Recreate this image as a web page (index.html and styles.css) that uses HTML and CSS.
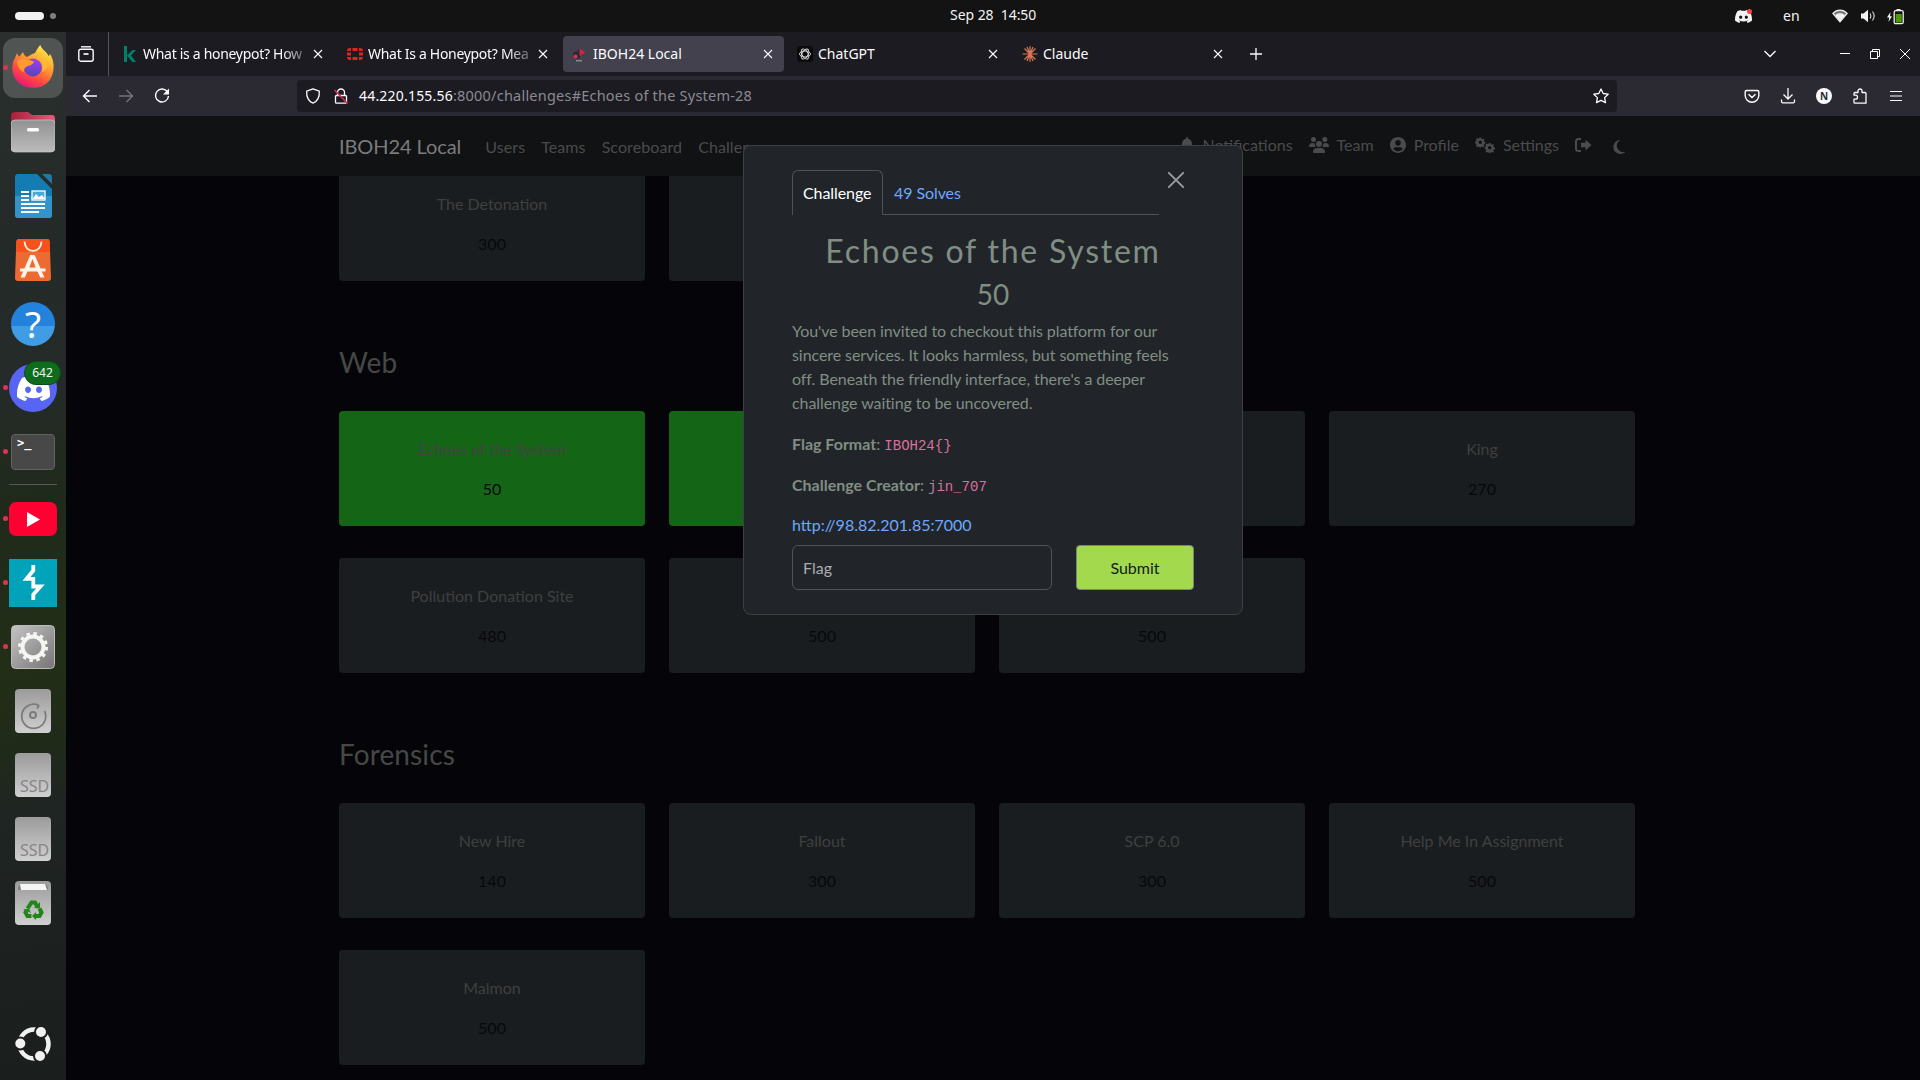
FILE: index.html
```html
<!DOCTYPE html>
<html lang="en">
<head>
<meta charset="utf-8">
<title>IBOH24 Local</title>
<link rel="stylesheet" href="styles.css">
</head>
<body>
<svg width="0" height="0" class="defs">
  <defs>
    <symbol id="x" viewBox="0 0 10 10"><path d="M1 1l8 8M9 1l-8 8" fill="none" stroke="currentColor" stroke-width="1.1"/></symbol>
    <symbol id="discord" viewBox="0 0 24 24"><path fill="currentColor" d="M20.317 4.3698a19.7913 19.7913 0 00-4.8851-1.5152.0741.0741 0 00-.0785.0371c-.211.3753-.4447.8648-.6083 1.2495-1.8447-.2762-3.68-.2762-5.4868 0-.1636-.3933-.4058-.8742-.6177-1.2495a.077.077 0 00-.0785-.037 19.7363 19.7363 0 00-4.8852 1.515.0699.0699 0 00-.0321.0277C.5334 9.0458-.319 13.5799.0992 18.0578a.0824.0824 0 00.0312.0561c2.0528 1.5076 4.0413 2.4228 5.9929 3.0294a.0777.0777 0 00.0842-.0276c.4616-.6304.8731-1.2952 1.226-1.9942a.076.076 0 00-.0416-.1057c-.6528-.2476-1.2743-.5495-1.8722-.8923a.077.077 0 01-.0076-.1277c.1258-.0943.2517-.1923.3718-.2914a.0743.0743 0 01.0776-.0105c3.9278 1.7933 8.18 1.7933 12.0614 0a.0739.0739 0 01.0785.0095c.1202.099.246.1981.3728.2924a.077.077 0 01-.0066.1276 12.2986 12.2986 0 01-1.873.8914.0766.0766 0 00-.0407.1067c.3604.698.7719 1.3628 1.225 1.9932a.076.076 0 00.0842.0286c1.961-.6067 3.9495-1.5219 6.0023-3.0294a.077.077 0 00.0313-.0552c.5004-5.177-.8382-9.6739-3.5485-13.6604a.061.061 0 00-.0312-.0286zM8.02 15.3312c-1.1825 0-2.1569-1.0857-2.1569-2.419 0-1.3332.9555-2.4189 2.157-2.4189 1.2108 0 2.1757 1.0952 2.1568 2.419 0 1.3332-.9555 2.4189-2.1569 2.4189zm7.9748 0c-1.1825 0-2.1569-1.0857-2.1569-2.419 0-1.3332.9554-2.4189 2.1569-2.4189 1.2108 0 2.1757 1.0952 2.1568 2.419 0 1.3332-.946 2.4189-2.1568 2.4189Z"/></symbol>
    <symbol id="gear" viewBox="0 0 20 20"><path fill="currentColor" fill-rule="evenodd" d="M8.4 1h3.2l.5 2.5 1.9.8 2.1-1.4 2.2 2.2-1.4 2.1.8 1.9 2.3.5v3.2l-2.5.5-.8 1.9 1.4 2.1-2.2 2.2-2.1-1.4-1.9.8-.5 2.1H8.4l-.5-2.3-1.9-.8-2.1 1.4-2.2-2.2 1.4-2.1-.8-1.9L0 11.600V8.400l2.300-.5.8-1.900L1.700 3.900l2.200-2.200L6 3.100l1.900-.8zM10 6.700a3.300 3.300 0 100 6.600 3.300 3.300 0 000-6.600z"/></symbol>
    <linearGradient id="gSilver" x1="0" y1="0" x2="0" y2="1"><stop offset="0" stop-color="#9b9b9b"/><stop offset="1" stop-color="#d0d0d0"/></linearGradient>
    <linearGradient id="gGrey" x1="0" y1="0" x2="1" y2="1"><stop offset="0" stop-color="#c4c4c4"/><stop offset="1" stop-color="#757575"/></linearGradient>
    <linearGradient id="gFolder" x1="0" y1="0" x2="0" y2="1"><stop offset="0" stop-color="#919191"/><stop offset="1" stop-color="#bcbcbc"/></linearGradient>
    <linearGradient id="gRed" x1="0" y1="0" x2="1" y2="0"><stop offset="0" stop-color="#a8203c"/><stop offset="1" stop-color="#e85a78"/></linearGradient>
    <linearGradient id="gFire" x1=".8" y1="0" x2=".25" y2="1"><stop offset="0" stop-color="#fff14f"/><stop offset=".38" stop-color="#ffa42e"/><stop offset=".68" stop-color="#ff4f3f"/><stop offset="1" stop-color="#e80f7c"/></linearGradient>
    <linearGradient id="gOrb" x1=".6" y1="0" x2=".4" y2="1"><stop offset="0" stop-color="#a13df2"/><stop offset="1" stop-color="#5246b8"/></linearGradient>
  </defs>
</svg>

<header class="topbar">
  <div class="workspaces"><i class="pill"></i><i class="dot"></i></div>
  <div class="clock">Sep 28&nbsp; 14:50</div>
  <div class="status">
    <span class="tray"><svg width="17" height="17"><use href="#discord"/></svg><i class="alert"></i></span>
    <span class="lang">en</span>
    <svg class="wifi" width="16" height="14" viewBox="0 0 16 14"><path d="M.7 4.300C5-.2 11-.2 15.300 4.300L8 13z" fill="#777"/><path d="M3 6.200c3-2.600 7-2.600 10 0L8 12.500z" fill="#f2f2f2"/><path d="M.9 4.400C5 0 11 0 15.100 4.400L8 12.800z" fill="none" stroke="#f2f2f2" stroke-width="1.200"/></svg>
    <svg class="vol" width="16" height="14" viewBox="0 0 16 14"><path d="M1 4.500h2.500L8 .8v12.400L3.500 9.500H1z" fill="#f2f2f2"/><path d="M10 4.500q1.600 2.500 0 5M12.500 2.500q3.300 4.500 0 9" fill="none" stroke="#ccc" stroke-width="1.200"/></svg>
    <svg class="bat" width="17" height="17" viewBox="0 0 17 17"><path d="M3.500 4L0 9.500h2.200L1.500 14 5 8.300H3z" fill="#f2f2f2"/><rect x="9.500" y="1" width="4" height="2" fill="#f2f2f2"/><rect x="7.200" y="2.700" width="9" height="13" rx="1.500" fill="none" stroke="#f2f2f2" stroke-width="1.300"/><rect x="8.700" y="6" width="6" height="8.500" fill="#4e9a06"/></svg>
  </div>
</header>

<div class="desktop">
  <nav class="dock">
    <div class="slot running focused"><svg width="44" height="46" viewBox="0 0 44 46">
      <path d="M24 9C26 5 28 2 29.500 1c1 4 5 6 7 9 .5 1 1 2 1.500 2l1-2c5 7 5 20-1 27-8 9-23 9-31 1C0 31 0 20 4 14l2-5 2 4 4-5c1 3 2 4 4 5 3-2 5-3 8-4z" fill="url(#gFire)"/>
      <circle cx="22" cy="23.500" r="9" fill="url(#gOrb)"/>
      <path d="M6 18c2-4 6-4 9-2 3 0 6 0 8 2-2 4-6 3-9 6-2 2-1 4-1 4-4-1-6-5-7-10z" fill="#ff9a2c"/>
      <path d="M25 13c6 3 8 8 6 15 3-1 6-5 6-9-2-5-6-7-12-6z" fill="#ffbd35" opacity=".8"/></svg></div>
    <div class="slot"><svg width="44" height="42" viewBox="0 0 44 42"><path d="M0 5q0-4 4-4h13l4 3h20q3 0 3 4v15H0z" fill="url(#gRed)"/><rect x="0" y="9" width="44" height="32" rx="4" fill="url(#gFolder)" stroke="#cacaca" stroke-width=".7"/><rect x="16" y="17" width="12" height="3.500" rx="1.500" fill="#fff"/></svg></div>
    <div class="slot"><svg width="37" height="44" viewBox="0 0 37 44"><path d="M3 0h19l15 15v26q0 3-3 3H3q-3 0-3-3V3q0-3 3-3z" fill="#137db3"/><path d="M0 22h37v19q0 3-3 3H3q-3 0-3-3z" fill="#3294c8"/><path d="M27 0h7q3 0 3 3v7z" fill="#2378a6"/><path d="M6 18h8M6 22h8M6 26h8M6 30h24M6 34h24M6 38h18" stroke="#fff" stroke-width="2"/><rect x="17" y="17" width="13" height="9" fill="#4ba9da" stroke="#fff" stroke-width="1.300"/><path d="M17.500 25l3.500-5 3 3 3-2 3 4z" fill="#fff"/></svg></div>
    <div class="slot"><svg width="36" height="42" viewBox="0 0 36 42"><path d="M4 0h28q2.500 0 2.700 3L36 39q0 3-3 3H3q-3 0-3-3L1.300 3Q1.500 0 4 0z" fill="#ee6a33"/><path d="M4 0h28q2.500 0 2.700 3l.4 10H.9l.4-10Q1.500 0 4 0z" fill="#f4511c"/><path d="M9.500 2.500c.5 12.500 16.500 12.500 17 0" fill="none" stroke="#fff0e4" stroke-width="1.800"/><path d="M15.300 16h4.400L29.500 38.500h-4.300l-3.300-7.500h-8.800l-3.300 7.500H5.500zM17.500 20l-3.200 8.500h6.400z" fill="#fff4ea"/><path d="M5 31h25.500" stroke="#fff4ea" stroke-width="3"/></svg></div>
    <div class="slot"><div class="help">?</div></div>
    <div class="slot running"><div class="discord"><svg width="33" height="33"><use href="#discord"/></svg></div><span class="badge">642</span></div>
    <div class="slot running"><div class="term">&gt;_</div></div>
    <div class="rule"></div>
    <div class="slot running"><div class="yt"><svg width="13" height="15" viewBox="0 0 13 15"><path d="M0 0l13 7.500L0 15z" fill="#fff"/></svg></div></div>
    <div class="slot running"><svg width="48" height="48" viewBox="0 0 48 48"><path d="M0 0h48v48H0z" fill="#00a3ba"/><path d="M24.300 6v5.500L17.500 19.800h6.800v7.700H31.500L24.300 35.500V41" fill="none" stroke="#fff" stroke-width="3.800"/></svg></div>
    <div class="slot running"><svg width="44" height="44" viewBox="0 0 44 44"><rect x=".5" y=".5" width="43" height="43" rx="4" fill="url(#gGrey)" stroke="#bbb"/><circle cx="22" cy="22" r="10.500" fill="none" stroke="#f5f5f2" stroke-width="4"/><circle cx="22" cy="22" r="13.500" fill="none" stroke="#f5f5f2" stroke-width="3" stroke-dasharray="3.500 3.568"/></svg></div>
    <div class="slot"><svg width="36" height="44" viewBox="0 0 36 44"><rect width="36" height="44" rx="4" fill="url(#gSilver)"/><path d="M24 16.500A12 12 0 1029.500 22" fill="none" stroke="#7c7c7c" stroke-width="1.800"/><path d="M24 16.500l-2 3" stroke="#7c7c7c" stroke-width="1.800"/><circle cx="18" cy="26" r="3" fill="none" stroke="#7c7c7c" stroke-width="2"/></svg></div>
    <div class="slot"><div class="ssd">SSD</div></div>
    <div class="slot"><div class="ssd">SSD</div></div>
    <div class="slot"><svg width="36" height="44" viewBox="0 0 36 44"><rect width="36" height="44" rx="4" fill="url(#gSilver)"/><path d="M3 9q0-6 4-6h22q4 0 4 6z" fill="#808080"/><path d="M5 3h25l2 6H6z" fill="#f5f5f5"/><g fill="none" stroke="#238517" stroke-width="4"><path d="M12.500 27.500l4-6h3.500l2 3.500"/><path d="M24.500 27.500l2 4-2 3.500H20"/><path d="M16.500 35h-4l-2-3.500 1-2"/></g><path d="M19 27l6 .5V21zM21 31v8l-4-4zM8 28h6l2 4z" fill="#238517"/></svg></div>
    <div class="spacer"></div>
    <div class="slot apps"><svg width="36" height="36" viewBox="0 0 36 36"><circle cx="19" cy="18" r="14.500" fill="none" stroke="#f1f1f1" stroke-width="4.500"/><g fill="#f1f1f1" stroke="#1c201f" stroke-width="2"><circle cx="5.300" cy="17.500" r="6"/><circle cx="26" cy="6" r="6"/><circle cx="25" cy="30" r="6"/></g></svg></div>
  </nav>

  <div class="browser">
    <div class="tabs">
      <div class="fxview"><svg width="16" height="16" viewBox="0 0 16 16" fill="none" stroke="#fbfbfe" stroke-width="1.400"><path d="M3 .8h10"/><rect x=".8" y="3.200" width="14.400" height="12" rx="2"/><path d="M5.500 8h5" stroke-width="1.700"/></svg></div>
      <div class="tab"><svg class="fav" width="16" height="16" viewBox="0 0 16 16"><path d="M2 0h3v16H2zM14 4L9 9.500l5 6.500h-3.500L5 9.500 10.500 4z" fill="#00816a"/></svg><span class="label fade">What is a honeypot? How</span><svg class="close"><use href="#x"/></svg></div>
      <div class="tab"><svg class="fav" width="16" height="12" viewBox="0 0 16 12" fill="#e2231a"><path d="M0 3q0-3 3-3h1v3zM5.500 0h5v3h-5zM12 0h1q3 0 3 3h-4zM0 4.500h4v3H0zM12 4.500h4v3h-4zM0 9h4v3H3Q0 12 0 9zM5.500 9h5v3h-5zM12 9h4q0 3-3 3h-1z"/></svg><span class="label fade">What Is a Honeypot? Mea</span><svg class="close"><use href="#x"/></svg></div>
      <div class="tab active"><svg class="fav" width="16" height="16" viewBox="0 0 16 16"><path d="M7 3v9" stroke="#2a2835" stroke-width="2"/><circle cx="4.500" cy="9" r="3.500" fill="#2b2936"/><circle cx="3.500" cy="10.500" r="2" fill="#e0304f"/><path d="M7.500 2.500l6 4-6 3.500z" fill="#d02545"/><path d="M4 14.800h6" stroke="#aaa"/></svg><span class="label">IBOH24 Local</span><svg class="close"><use href="#x"/></svg></div>
      <div class="tab"><svg class="fav" width="16" height="16" viewBox="0 0 16 16"><rect width="16" height="16" rx="3" fill="#0b0b0b"/><g fill="none" stroke="#ddd" stroke-width=".9"><ellipse cx="8" cy="8" rx="5.500" ry="3"/><ellipse cx="8" cy="8" rx="5.500" ry="3" transform="rotate(60 8 8)"/><ellipse cx="8" cy="8" rx="5.500" ry="3" transform="rotate(120 8 8)"/></g></svg><span class="label">ChatGPT</span><svg class="close"><use href="#x"/></svg></div>
      <div class="tab"><svg class="fav" width="16" height="16" viewBox="0 0 16 16"><path d="M8 .3v15.400M.5 8h15M2.500 2.500l11 11M13.500 2.500l-11 11M5 1l6 14M11 1L5 15" stroke="#d97757" stroke-width="1.200"/></svg><span class="label">Claude</span><svg class="close"><use href="#x"/></svg></div>
      <svg class="newtab" width="12" height="12" viewBox="0 0 12 12"><path d="M6 0v12M0 6h12" stroke="#fbfbfe" stroke-width="1.300"/></svg>
      <div class="wincontrols">
        <svg class="chev" width="12" height="8" viewBox="0 0 12 8"><path d="M.5 1L6 6.500 11.500 1" fill="none" stroke="#fbfbfe" stroke-width="1.300"/></svg>
        <svg width="10" height="10" viewBox="0 0 10 10"><path d="M0 4.500h10" stroke="#fff"/></svg>
        <svg width="10" height="10" viewBox="0 0 10 10" fill="none" stroke="#fff"><path d="M.5 2.500h7v7h-7zM2.500 2.500v-2h7v7h-2"/></svg>
        <svg width="10" height="10" viewBox="0 0 10 10"><path d="M0 0l10 10M10 0L0 10" stroke="#fff"/></svg>
      </div>
    </div>
    <div class="toolbar">
      <div class="navbtns">
        <svg width="16" height="16" viewBox="0 0 16 16" fill="none" stroke="#fbfbfe" stroke-width="1.400"><path d="M15 8H1.500M7.500 2L1.500 8l6 6"/></svg>
        <svg width="16" height="16" viewBox="0 0 16 16" fill="none" stroke="#74737c" stroke-width="1.400"><path d="M1 8h13.500M8.500 2l6 6-6 6"/></svg>
        <svg width="16" height="16" viewBox="0 0 16 16"><path d="M13.500 4A6.500 6.500 0 1014.500 8" fill="none" stroke="#fbfbfe" stroke-width="1.400"/><path d="M15 .5v6H9z" fill="#fbfbfe"/></svg>
      </div>
      <div class="url">
        <svg width="16" height="16" viewBox="0 0 16 16"><path d="M8 .9l6.300 2.300c.3 5-1.300 9.800-6.300 12C3 13 1.400 8.200 1.700 3.200z" fill="none" stroke="#fbfbfe" stroke-width="1.300" stroke-linejoin="round"/></svg>
        <svg class="lock" width="16" height="16" viewBox="0 0 16 16"><path d="M4.500 7.500v-3a3.500 3.500 0 017 0v3M3.500 7.500h9q1 0 1 1v5.700q0 1-1 1h-9q-1 0-1-1V8.500q0-1 1-1z" fill="none" stroke="#fbfbfe" stroke-width="1.300"/><path d="M1.500 2l13 13.500" stroke="#e22850" stroke-width="1.500"/></svg>
        <span class="host">44.220.155.56</span><span class="path">:8000/challenges#Echoes of the System-28</span>
        <svg class="star" width="16" height="16" viewBox="0 0 16 16"><path d="M8 1l2.200 4.500 5 .7-3.600 3.400.9 5L8 12.300l-4.500 2.300.9-5L.8 6.200l5-.7z" fill="none" stroke="#fbfbfe" stroke-width="1.300" stroke-linejoin="round"/></svg>
      </div>
      <div class="tools">
        <svg width="16" height="16" viewBox="0 0 16 16" fill="none" stroke="#fbfbfe" stroke-width="1.400"><path d="M2.500 2.500h11q1.300 0 1.300 1.300V7.500a6.800 6.800 0 01-13.600 0V3.800q0-1.300 1.300-1.300zM4.500 6.200L8 9.500l3.500-3.300"/></svg>
        <svg width="16" height="16" viewBox="0 0 16 16" fill="none" stroke="#fbfbfe" stroke-width="1.300"><path d="M8 0v10.500M3.500 6.500L8 11l4.500-4.500M1.500 11.500v2q0 1.300 1.300 1.300h10.400q1.300 0 1.300-1.300v-2"/></svg>
        <span class="avatar">N</span>
        <svg width="16" height="16" viewBox="0 0 16 16" fill="none" stroke="#fbfbfe" stroke-width="1.300" stroke-linejoin="round"><path d="M2 5.500q0-1 1-1h3V3a2 2 0 014 0v1.500h3q1 0 1 1v9.700H3q-1 0-1-1v-3h1.500a2 2 0 000-4H2z"/></svg>
        <svg width="12" height="12" viewBox="0 0 12 12"><path d="M0 1.500h12M0 6h12M0 10.500h12" stroke="#fbfbfe" stroke-width="1.200"/></svg>
      </div>
    </div>

    <div class="page">
      <div class="navbar"><div class="container">
        <span class="brand">IBOH24 Local</span>
        <span class="link">Users</span><span class="link">Teams</span><span class="link">Scoreboard</span><span class="link">Challenges</span>
        <div class="right">
          <span class="item"><svg width="14" height="16" viewBox="0 0 448 512"><path fill="currentColor" d="M224 512c35.320 0 63.970-28.650 63.970-64H160.030c0 35.350 28.650 64 63.970 64zm215.390-149.710c-19.320-20.760-55.470-51.990-55.470-154.290 0-77.700-54.480-139.900-127.940-155.160V32c0-17.670-14.320-32-31.980-32s-31.980 14.330-31.980 32v20.840C118.560 68.100 64.080 130.300 64.080 208c0 102.300-36.150 133.530-55.470 154.290-6 6.450-8.660 14.160-8.610 21.710.11 16.400 12.980 32 32.100 32h383.800c19.120 0 32-15.600 32.100-32 .05-7.550-2.610-15.270-8.610-21.710z"/></svg>Notifications</span>
          <span class="item"><svg width="20" height="16" viewBox="0 0 20 16" fill="currentColor"><circle cx="4.500" cy="2.500" r="2.500"/><circle cx="15.800" cy="2.500" r="2.500"/><circle cx="10" cy="7" r="3"/><path d="M0 9.500q0-3.500 3.500-3.500 1.500 0 2.500.7-.5 2 .7 3.300H.5zM20 9.500Q20 6 16.500 6q-1.500 0-2.500.7.500 2-.7 3.300h6.200zM4 15.500q0-4.500 4-4.500h4q4 0 4 4.500l-.5.5h-11z"/></svg>Team</span>
          <span class="item"><svg width="16" height="16" viewBox="0 8 496 496"><path fill="currentColor" d="M248 8C111 8 0 119 0 256s111 248 248 248 248-111 248-248S385 8 248 8zm0 96c48.600 0 88 39.400 88 88s-39.400 88-88 88-88-39.400-88-88 39.400-88 88-88zm0 344c-58.700 0-111.300-26.600-146.500-68.200 18.800-35.400 55.600-59.800 98.500-59.800 2.400 0 4.800.4 7.100 1.100 13 4.200 26.600 6.900 40.900 6.900 14.300 0 28-2.700 40.900-6.900 2.300-.7 4.700-1.100 7.100-1.100 42.900 0 79.700 24.400 98.500 59.800C359.300 421.400 306.700 448 248 448z"/></svg>Profile</span>
          <span class="item"><svg width="20" height="16" viewBox="0 0 20 16"><use href="#gear" x="0" y="0" width="10.500" height="10.500"/><use href="#gear" x="9.500" y="5.500" width="10.500" height="10.500"/></svg>Settings</span>
          <span class="item"><svg width="17" height="14" viewBox="0 0 17 14"><path d="M6 1H3.500Q1 1 1 3.500v7Q1 13 3.500 13H6" fill="none" stroke="currentColor" stroke-width="2"/><path d="M6 4.800h4.500V1.500L16.500 7l-6 5.500V9.200H6z" fill="currentColor"/></svg></span>
          <span class="item moon"><svg width="13" height="14" viewBox="0 0 13 14"><path d="M7.500 0a7 7 0 105.200 11.500A6 6 0 017.500 0z" fill="currentColor"/></svg></span>
        </div>
      </div></div>

      <main class="container content">
        <div class="grid first">
          <div class="card"><p>The Detonation</p><span>300</span></div>
          <div class="card"></div>
        </div>
        <h3>Web</h3>
        <div class="grid">
          <div class="card solved"><p>Echoes of the System</p><span>50</span></div>
          <div class="card solved"></div>
          <div class="card"></div>
          <div class="card"><p>King</p><span>270</span></div>
          <div class="card"><p>Pollution Donation Site</p><span>480</span></div>
          <div class="card"><p>&nbsp;</p><span>500</span></div>
          <div class="card"><p>&nbsp;</p><span>500</span></div>
        </div>
        <h3>Forensics</h3>
        <div class="grid">
          <div class="card"><p>New Hire</p><span>140</span></div>
          <div class="card"><p>Fallout</p><span>300</span></div>
          <div class="card"><p>SCP 6.0</p><span>300</span></div>
          <div class="card"><p>Help Me In Assignment</p><span>500</span></div>
          <div class="card"><p>Malmon</p><span>500</span></div>
        </div>
      </main>

      <section class="modal">
        <div class="modal-head">
          <div class="mtabs"><span class="mtab on">Challenge</span><span class="mtab">49 Solves</span></div>
          <svg class="mclose" width="16" height="16" viewBox="0 0 16 16"><path d="M.8.8l14.400 14.400M15.200.8L.8 15.200" stroke="#9b9d9f" stroke-width="1.900" stroke-linecap="round"/></svg>
        </div>
        <h2>Echoes of the System</h2>
        <h4>50</h4>
        <p>You've been invited to checkout this platform for our<br>sincere services. It looks harmless, but something feels<br>off. Beneath the friendly interface, there's a deeper<br>challenge waiting to be uncovered.</p>
        <p class="meta"><b>Flag Format</b>: <code>IBOH24{}</code></p>
        <p class="meta"><b>Challenge Creator</b>: <code>jin_707</code></p>
        <a>http://98.82.201.85:7000</a>
        <div class="form"><div class="input">Flag</div><div class="submit">Submit</div></div>
      </section>
    </div>
  </div>
</div>
</body>
</html>
```
FILE: styles.css
```css
* { box-sizing: border-box; }
body { margin: 0; width: 1920px; height: 1080px; overflow: hidden; display: flex; flex-direction: column; background: #050509; font-family: "Noto Sans", sans-serif; }
svg { display: block; flex: none; }
.defs { position: absolute; }

/* system bar */
.topbar { height: 32px; flex: none; background: #131313; color: #f2f2f2; display: grid; grid-template-columns: 1fr auto 1fr; align-items: center; font-size: 14px; padding-right: 16px; }
.workspaces { display: flex; align-items: center; gap: 6px; padding-left: 15px; }
.pill { width: 29px; height: 8px; border-radius: 4px; background: #f2f2f2; }
.dot { width: 6px; height: 6px; border-radius: 50%; background: #808080; }
.clock { width: 87px; margin-left: 83px; font-size: 14px; letter-spacing: -.05px; white-space: nowrap; line-height: 30px; height: 32px; }
.status { display: flex; align-items: center; justify-content: flex-end; }
.tray { position: relative; margin-right: 31px; }
.alert { position: absolute; right: 0; top: 1px; width: 5px; height: 5px; border-radius: 50%; background: #f04747; }
.lang { width: 17px; margin-right: 32px; margin-top: -1px; }
.wifi { margin-right: 12px; }
.vol { margin-right: 11px; }

.desktop { flex: 1; display: flex; min-height: 0; }

/* launcher */
.dock { width: 66px; flex: none; display: flex; flex-direction: column; padding-top: 4px; background: linear-gradient(168deg, #2b302e 0%, #232a27 20%, #252b28 34%, #202a1b 45%, #232e17 60%, #202a19 68%, #1f2523 74%, #1a1e1d 100%); }
.slot { position: relative; height: 64px; flex: none; display: flex; align-items: center; justify-content: center; }
.focused::after { content: ""; position: absolute; inset: 2px 3px; border-radius: 12px; background: rgba(255,255,255,.18); }
.focused svg { position: relative; z-index: 1; top: -1px; }
.running::before { content: ""; position: absolute; left: 3px; top: 29px; width: 5px; height: 5px; border-radius: 50%; background: #dc3550; z-index: 2; }
.help { width: 44px; height: 44px; border-radius: 50%; background: linear-gradient(#2382dc 54%, #409ce4 54%); color: #fff; font: 37px/44px "Noto Sans", sans-serif; text-align: center; }
.discord { width: 48px; height: 48px; border-radius: 50%; background: #5865f2; color: #fff; display: flex; align-items: center; justify-content: center; }
.badge { position: absolute; left: 24px; top: 5px; width: 37px; height: 24px; border-radius: 12px; background: #0e6d1c; border: 1px solid #0b4d14; color: #f2f2f2; font-size: 12px; line-height: 22px; text-align: center; }
.term { width: 44px; height: 36px; border-radius: 4px; background: #484848; border: 1px solid #626262; color: #fff; font: bold 12px/17px "DejaVu Sans Mono", monospace; padding-left: 5px; }
.rule { height: 3px; margin: 0 9px; border-top: 1px solid #545955; flex: none; }
.yt { width: 48px; height: 34px; border-radius: 7px; background: #ff0033; display: flex; align-items: center; justify-content: center; }
.ssd { width: 36px; height: 44px; border-radius: 4px; background: linear-gradient(#9b9b9b, #d0d0d0); color: #868686; font: 16px/22px "Noto Sans", sans-serif; padding: 22px 0 0 5px; white-space: nowrap; }
.spacer { flex: 1; }
.apps { margin-bottom: 4px; }

/* browser chrome */
.browser { flex: 1; display: flex; flex-direction: column; min-width: 0; }
.tabs { height: 44px; flex: none; background: #1c1b22; color: #fbfbfe; display: flex; align-items: center; }
.fxview { width: 43px; height: 44px; margin-right: 2px; border-right: 1px solid #54535a; display: flex; align-items: center; padding-left: 12px; }
.tab { width: 221px; height: 36px; margin: 0 2px; border-radius: 4px; flex: none; display: flex; align-items: center; padding: 0 11px 0 9px; font-size: 14px; }
.active { background: #42414d; }
.fav { margin-right: 5px; }
.label { flex: 1; min-width: 0; white-space: nowrap; line-height: 20px; margin-top: -1px; }
.fade { letter-spacing: -.3px; -webkit-mask-image: linear-gradient(90deg, #000 84%, transparent 104%); mask-image: linear-gradient(90deg, #000 84%, transparent 104%); }
.close { width: 10px; height: 10px; margin-left: 5px; }
.newtab { margin-left: 14px; }
.wincontrols { margin-left: auto; padding-right: 10px; display: flex; align-items: center; gap: 20px; }
.chev { margin-right: 44px; }
.toolbar { height: 40px; flex: none; background: #2b2a33; display: flex; align-items: center; }
.navbtns { width: 231px; padding-left: 16px; display: flex; gap: 20px; }
.url { width: 1320px; height: 32px; border-radius: 4px; background: #1c1b22; display: flex; align-items: center; padding: 0 8px; font-size: 14px; color: #8b8a92; white-space: nowrap; }
.lock { margin: 0 10px 0 12px; }
.host, .path { margin-top: -2px; }
.host { color: #fbfbfe; letter-spacing: .2px; }
.path { font-size: 14.500px; letter-spacing: .22px; }
.star { margin-left: auto; }
.tools { flex: 1; display: flex; align-items: center; justify-content: flex-end; gap: 20px; padding-right: 18px; }
.tools > :last-child { margin-left: 2px; }
.avatar { width: 16px; height: 16px; border-radius: 50%; background: #fbfbfe; color: #2b2a33; font: bold 10px/16px "Noto Sans", sans-serif; text-align: center; }

/* page */
.page { flex: 1; position: relative; background: #050509; font-family: Lato, sans-serif; font-size: 16px; line-height: 24px; overflow: hidden; padding-right: 12px; }
.container { width: 1296px; margin: 0 auto; }
.navbar { height: 60px; margin-right: -12px; padding-right: 12px; background: #111214; color: #4a4b4c; position: relative; z-index: 1; }
.navbar .container { height: 60px; display: flex; align-items: center; }
.brand { font-size: 20px; color: #7b7c7d; margin-right: 24px; letter-spacing: -.08px; }
.link { margin-right: 16px; padding-top: 1px; letter-spacing: .09px; }
.right { margin-left: auto; padding: 0 9px 2px 0; display: flex; align-items: center; gap: 16px; }
.item { display: flex; align-items: center; gap: 8px; }
.moon { margin-left: 5px; padding-top: 4px; }
.content { margin-top: -10px; }
.grid { display: grid; grid-template-columns: repeat(4, 306px); gap: 32px 24px; }
.card { height: 115px; border-radius: 4px; background: #1a1d1f; text-align: center; color: #3e403f; padding-top: 26px; }
.card p { margin: 0 0 16px; }
.card span { color: #07080b; display: block; }
.solved { background: #156516; color: #444244; }
.solved p { letter-spacing: -.1px; }
h3 { margin: 0; height: 130px; padding-top: 64px; font-weight: 400; font-size: 28px; line-height: 34px; color: #454845; letter-spacing: .12px; }

/* challenge dialog */
.modal { position: absolute; z-index: 2; left: 677px; top: 29px; width: 500px; height: 470px; border: 1px solid #3b4044; border-radius: 8px; background: #212529; padding: 24px 48px; color: #808e83; }
.modal-head { display: flex; }
.mtabs { width: 367px; height: 45px; border-bottom: 1px solid #4d5257; display: flex; }
.mtab { height: 45px; padding: 11px 11px 0; color: #6ea8fe; letter-spacing: -.08px; }
.on { width: 91px; padding: 10px 0 0 10px; color: #fff; background: #212529; border: 1px solid #4d5257; border-bottom: 0; border-radius: 6px 6px 0 0; }
.mclose { margin: 2px 0 0 9px; }
h2 { margin: 17px -2px 0; text-align: center; font-weight: 400; font-size: 32px; line-height: 38px; letter-spacing: 1.760px; white-space: nowrap; }
h4 { margin: 7px 0 8px; text-align: center; font-weight: 400; font-size: 28px; line-height: 34px; }
.modal p { margin: 0 0 16px; white-space: nowrap; letter-spacing: -.07px; }
.modal .meta { line-height: 25px; letter-spacing: 0; }
code { font: 14px "Liberation Mono", monospace; color: #d9709f; }
.modal a { color: #6ea8fe; display: block; }
.form { display: flex; gap: 24px; margin-top: 8px; }
.input { width: 260px; height: 45px; border: 1px solid #4d5257; border-radius: 6px; padding: 10px; color: #a9adb1; }
.submit { width: 118px; height: 45px; border: 1px solid #7a8580; border-radius: 4px; background: #a2d94d; color: #15191c; text-align: center; padding-top: 10px; }
```
